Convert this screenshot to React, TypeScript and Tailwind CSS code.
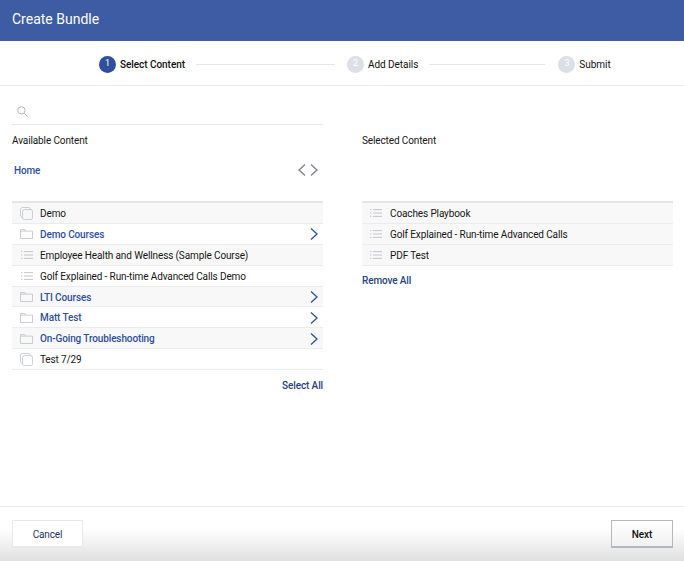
const available = [
  { name: "Demo", type: "copy" },
  { name: "Demo Courses", type: "folder" },
  { name: "Employee Health and Wellness (Sample Course)", type: "list" },
  { name: "Golf Explained - Run-time Advanced Calls Demo", type: "list" },
  { name: "LTI Courses", type: "folder" },
  { name: "Matt Test", type: "folder" },
  { name: "On-Going Troubleshooting", type: "folder" },
  { name: "Test 7/29", type: "copy" },
];

const selected = ["Coaches Playbook", "Golf Explained - Run-time Advanced Calls", "PDF Test"];

function ListIcon() {
  return (
    <svg viewBox="0 0 12 8" className="h-[8px] w-[12px]" fill="none" stroke="#b4b7c1" strokeWidth="0.8">
      <path d="M0 .6h1.4M0 4h1.4M0 7.4h1.4M3 .6h9M3 4h9M3 7.4h9" />
    </svg>
  );
}

function FolderIcon() {
  return (
    <svg viewBox="0 0 13 10" className="h-[10px] w-[13px]" fill="none" stroke="#bcc0cb" strokeWidth="0.8">
      <path d="M0.5 9.5V0.6h4.4l1 1.5h6.6v7.4zM0.5 2.1h5.4" />
    </svg>
  );
}

function CopyIcon() {
  return (
    <svg viewBox="0 0 13 13" className="h-[13px] w-[13px]" fill="none" stroke="#bcc0cb" strokeWidth="0.8">
      <rect x="2.6" y="2.6" width="10" height="10" rx="2" />
      <path d="M2.6 10.8C1.2 10.4.4 9.4.4 8V2.8C.4 1.4 1.4.4 2.8.4H8c1.4 0 2.4.8 2.8 2.2" />
    </svg>
  );
}

function Chevron({ left = false, color = "#2f4f9e" }: { left?: boolean; color?: string }) {
  return (
    <svg viewBox="0 0 8 12" className="h-[12px] w-[8px]" fill="none" stroke={color} strokeWidth="1.3">
      <path d={left ? "M7 .6 1 6l6 5.4" : "M1 .6 7 6l-6 5.4"} />
    </svg>
  );
}

function Step({ n, label, active = false }: { n: number; label: string; active?: boolean }) {
  return (
    <div className="flex items-center gap-[4px]">
      <span
        className={
          active
            ? "flex h-[17px] w-[17px] items-center justify-center rounded-full bg-[#2f4f9e] text-[9px] text-white"
            : "flex h-[17px] w-[17px] items-center justify-center rounded-full bg-[#dcdfe7] text-[9px] text-white"
        }
      >
        {n}
      </span>
      <span className={active ? "font-medium tracking-[-0.05px] text-[#111]" : "tracking-[-0.05px] text-[#111]"}>{label}</span>
    </div>
  );
}

export default function App() {
  return (
    <div className="flex h-[561px] w-[684px] flex-col overflow-hidden bg-white font-['Roboto',sans-serif] text-[10px] tracking-[-0.12px] text-[#161616]">
      <header className="flex h-[41px] shrink-0 items-center bg-[#3d5ca3] pb-[2px] pl-3 text-[14px] tracking-normal text-white">Create Bundle</header>

      <div className="flex h-[45px] shrink-0 items-center border-b border-[#e9e9ec] pl-[99px] pt-[2px]">
        <Step n={1} label="Select Content" active />
        <div className="ml-[11px] mr-[12px] h-px w-[139px] bg-[#e6e7ee]" />
        <Step n={2} label="Add Details" />
        <div className="ml-[11px] mr-[13px] h-px w-[116px] bg-[#e6e7ee]" />
        <Step n={3} label="Submit" />
      </div>

      <main className="flex min-h-0 flex-1 gap-[39px] pl-3 pr-[11px]">
        <section className="w-[311px]">
          <div className="mt-[14px] flex h-[25px] items-start border-b border-[#e6e7ee] pl-[5px] pt-[6px]">
            <svg viewBox="0 0 12 12" className="h-[11px] w-[11px]" fill="none" stroke="#aeb1c2" strokeWidth="1">
              <circle cx="4.8" cy="4.8" r="4" />
              <path d="m7.8 7.8 3.7 3.7" />
            </svg>
          </div>
          <h2 className="mt-[9px] leading-[14px]">Available Content</h2>
          <div className="mt-[15px] flex h-[14px] items-center justify-between pl-[2px] pr-[5px]">
            <span className="font-medium text-[#2f4f9e]">Home</span>
            <div className="flex items-center gap-[4px]">
              <Chevron left color="#7d8290" />
              <Chevron color="#7d8290" />
            </div>
          </div>

          <ul className="mt-[24px] border-t-2 border-[#e4e5ea]">
            {available.map((item, i) => (
              <li
                key={item.name}
                className={
                  i % 2 === 0
                    ? "flex h-[20.9px] items-center border-b border-[#ebecf0] bg-[#f8f8f8] pl-[8px] pr-[5px] pt-px"
                    : "flex h-[20.9px] items-center border-b border-[#ebecf0] bg-white pl-[8px] pr-[5px] pt-px"
                }
              >
                <span className="flex w-[20px] shrink-0 items-center justify-start">
                  {item.type === "folder" && <FolderIcon />}
                  {item.type === "list" && (
                    <span className="pl-px">
                      <ListIcon />
                    </span>
                  )}
                  {item.type === "copy" && <CopyIcon />}
                </span>
                <span className={item.type === "folder" ? "flex-1 font-medium text-[#2f4f9e]" : "flex-1"}>{item.name}</span>
                {item.type === "folder" && <Chevron />}
              </li>
            ))}
          </ul>
          <div className="mt-[9px] text-right font-medium leading-[14px] text-[#26437f]">Select All</div>
        </section>

        <section className="w-[311px]">
          <h2 className="mt-[48px] leading-[14px]">Selected Content</h2>
          <ul className="mt-[53px] border-t-2 border-[#e4e5ea]">
            {selected.map((name) => (
              <li key={name} className="flex h-[20.9px] items-center border-b border-[#ebecf0] bg-[#f8f8f8] pl-[8px] pt-px">
                <span className="flex w-[20px] shrink-0 items-center">
                  <ListIcon />
                </span>
                <span>{name}</span>
              </li>
            ))}
          </ul>
          <div className="mt-[8px] font-medium leading-[14px] text-[#26437f]">Remove All</div>
        </section>
      </main>

      <footer className="flex h-[55px] shrink-0 items-start justify-between border-t border-[#e9e9ec] bg-gradient-to-b from-white from-40% to-[#e0e0e0] pl-3 pr-[11px] pt-[13px]">
        <button className="h-[28px] w-[71px] border border-[#e9e9ec] border-b-2 bg-white pt-px text-[#26375f]">Cancel</button>
        <button className="h-[28px] w-[62px] border border-[#b4b6c0] border-b-2 bg-gradient-to-b from-white to-[#f1f1f3] pt-px font-medium text-[#111]">Next</button>
      </footer>
    </div>
  );
}
